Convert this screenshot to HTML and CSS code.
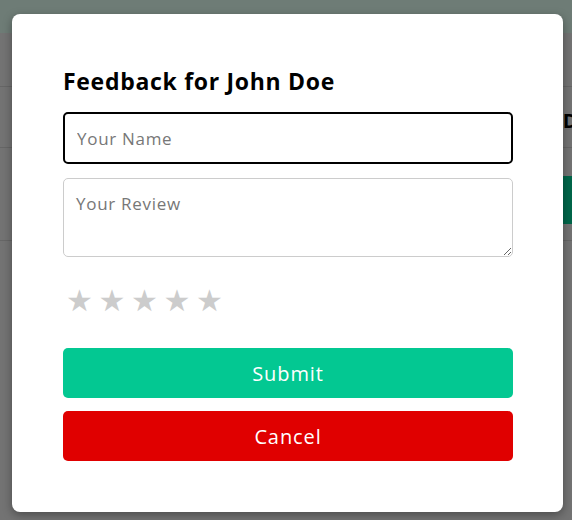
FILE: index.html
```html
<!DOCTYPE html>
<html lang="en">
<head>
<meta charset="utf-8">
<title>Feedback</title>
<link rel="stylesheet" href="styles.css">
</head>
<body>
<div class="page">
  <header class="topbar"></header>
  <div class="row row-a"></div>
  <div class="row row-b"><span class="row-name">Do</span></div>
  <div class="row row-c"><span class="row-btn"></span></div>
  <div class="row row-d"></div>
</div>

<div class="modal">
  <h2 class="modal-title">Feedback for John Doe</h2>
  <form class="form">
    <input class="field field-name" type="text" placeholder="Your Name" autofocus>
    <textarea class="field field-review" placeholder="Your Review"></textarea>
    <div class="stars">
      <span class="star">★</span><span class="star">★</span><span class="star">★</span><span class="star">★</span><span class="star">★</span>
    </div>
    <div class="actions">
      <button type="button" class="btn btn-submit">Submit</button>
      <button type="button" class="btn btn-cancel">Cancel</button>
    </div>
  </form>
</div>
</body>
</html>
```
FILE: styles.css
```css
* { box-sizing: border-box; }
html, body { margin: 0; padding: 0; }
body {
  width: 572px;
  height: 520px;
  overflow: hidden;
  background: #737373;
  font-family: "Open Sans", "Liberation Sans", sans-serif;
  position: relative;
}
.page { display: flex; flex-direction: column; }
.topbar { height: 33px; background: #6e7c76; }
.row { border-bottom: 1px solid #666666; display: flex; align-items: center; justify-content: flex-end; }
.row-a { height: 54px; }
.row-b { height: 61px; }
.row-c { height: 93px; }
.row-d { height: 120px; border-bottom: none; }
.row-name { font-weight: 700; font-size: 20px; color: #000; margin-right: -18px; margin-top: 6px; }
.row-btn { width: 60px; height: 48px; background: #00664a; margin-right: -40px; margin-top: 12px; }

.modal {
  position: absolute;
  left: 12px;
  top: 14px;
  width: 551px;
  height: 498px;
  background: #fff;
  border-radius: 8px;
  box-shadow: 0 3px 10px rgba(0, 0, 0, 0.35);
  padding: 52px 50px 50px 51px;
}
.modal-title {
  margin: 0 0 16px;
  font-size: 23px;
  line-height: 30px;
  font-weight: 700;
  letter-spacing: 0.7px;
  color: #000;
}
.form { display: flex; flex-direction: column; }
.field {
  width: 450px;
  font-family: inherit;
  font-size: 17px;
  letter-spacing: 0.7px;
  color: #333;
  border-radius: 5px;
  outline: none;
}
.field::placeholder { color: #777; }
.field-name {
  height: 52px;
  border: 2px solid #000;
  padding: 0 12px;
}
.field-review {
  margin-top: 14px;
  height: 79px;
  border: 1px solid #ccc;
  padding: 13px 12px;
  resize: vertical;
}
.stars { display: flex; gap: 8px; margin-top: 24px; padding-left: 3px; height: 40px; align-items: center; }
.star { color: #cccccc; font-size: 30px; line-height: 1; font-family: "DejaVu Sans", sans-serif; width: 24.5px; }
.actions { display: flex; flex-direction: column; gap: 13px; margin-top: 27px; }
.btn {
  width: 450px;
  height: 50px;
  border: none;
  border-radius: 5px;
  color: #fff;
  font-family: inherit;
  font-size: 20px;
  letter-spacing: 0.9px;
  cursor: pointer;
}
.btn-submit { background: #03c892; }
.btn-cancel { background: #e00000; }
```
